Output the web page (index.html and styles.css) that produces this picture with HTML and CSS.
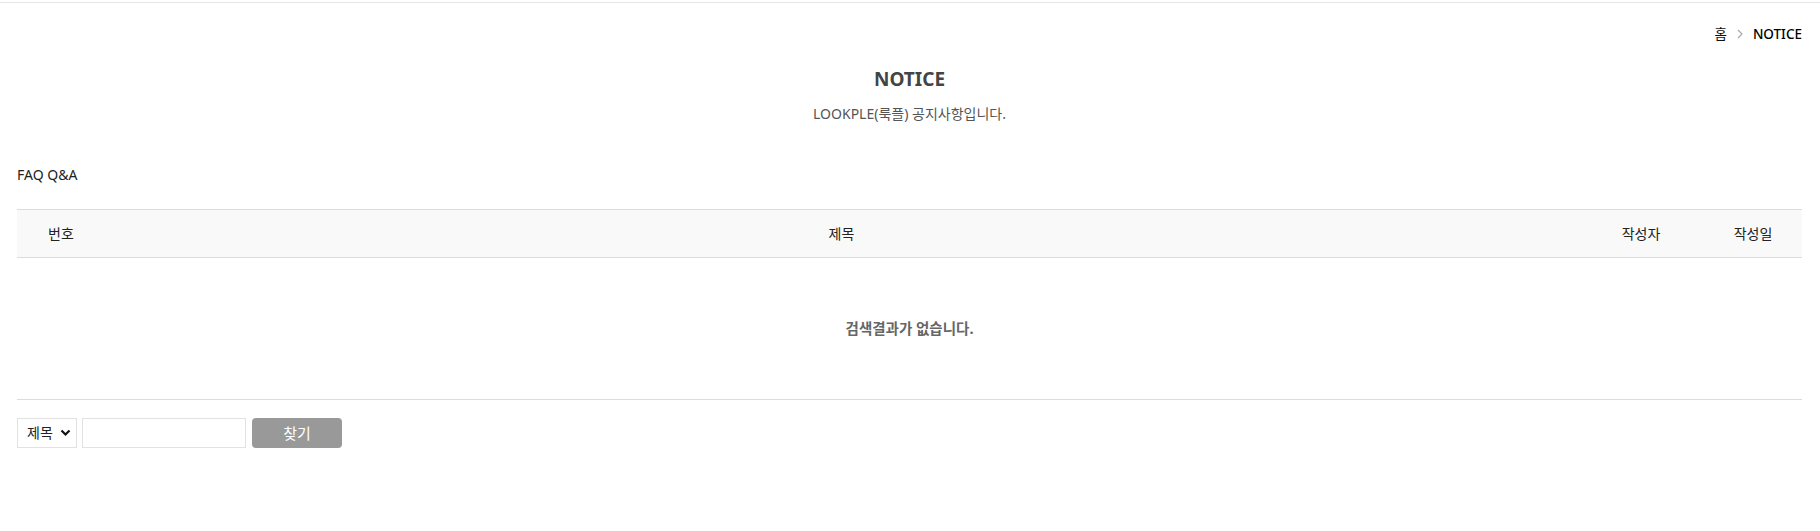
FILE: index.html
```html
<!DOCTYPE html>
<html lang="ko">
<head>
<meta charset="utf-8">
<title>NOTICE</title>
<link rel="stylesheet" href="styles.css">
</head>
<body>
<div class="topline"></div>
<div class="wrap">
  <nav class="crumb">
    <span>홈</span>
    <svg class="sep" width="6" height="10" viewBox="0 0 6 10"><path d="M1 1l4 4-4 4" fill="none" stroke="#aaa" stroke-width="1.2"/></svg>
    <strong>NOTICE</strong>
  </nav>
  <h2 class="title">NOTICE</h2>
  <p class="desc">LOOKPLE(룩플) 공지사항입니다.</p>
  <div class="links">FAQ Q&amp;A</div>
  <div class="board">
    <div class="row head">
      <div class="c-no">번호</div>
      <div class="c-subj">제목</div>
      <div class="c-writer">작성자</div>
      <div class="c-date">작성일</div>
    </div>
    <div class="empty">검색결과가 없습니다.</div>
  </div>
  <form class="search">
    <div class="sel">
      <select><option>제목</option></select>
      <svg class="chev" width="11" height="8" viewBox="0 0 11 8"><path d="M1.5 1.5l4 4 4-4" fill="none" stroke="#111" stroke-width="2.2"/></svg>
    </div>
    <input type="text" class="kw">
    <button type="button" class="btn">찾기</button>
  </form>
</div>
</body>
</html>
```
FILE: styles.css
```css
html, body { margin: 0; padding: 0; background: #fff; }
body {
  font-family: "Noto Sans", "Noto Sans CJK KR", sans-serif;
  font-size: 14px;
  color: #222;
}
.topline { margin-top: 2px; height: 1px; background: #e6e6e6; }
.wrap { padding: 0 18px 0 17px; }
.crumb {
  display: flex; justify-content: flex-end; align-items: center;
  gap: 10px; padding-top: 21px; height: 20px; line-height: 20px;
  font-size: 13.5px; color: #111;
}
.crumb strong { font-weight: 500; color: #000; }
.crumb .sep { display: block; }
.title {
  margin: 23px 0 0; text-align: center;
  font-size: 19px; line-height: 24px; font-weight: 700; color: #444;
}
.desc {
  margin: 14px 0 0; text-align: center;
  font-size: 14px; line-height: 18px; color: #555;
}
.links { margin-top: 42px; line-height: 20px; font-size: 14px; color: #222; }
.board { margin-top: 24px; }
.row.head {
  display: grid; grid-template-columns: 88px 1fr 126px 98px;
  align-items: center; height: 45px; padding-bottom: 2px;
  background: #f9f9f9; border-top: 1px solid #dcdcdc; border-bottom: 1px solid #dcdcdc;
  font-size: 14px; color: #222; text-align: center;
}
.empty {
  height: 138px; padding-bottom: 3px; display: flex; align-items: center; justify-content: center;
  border-bottom: 1px solid #dcdcdc;
  font-size: 14.5px; font-weight: 700; color: #666;
}
.search { display: flex; align-items: center; margin-top: 18px; }
.sel { position: relative; width: 60px; height: 30px; }
.sel select {
  appearance: none; -webkit-appearance: none;
  width: 60px; height: 30px; box-sizing: border-box;
  border: 1px solid #e2e2e2; background: #fff; border-radius: 0;
  padding: 0 0 2px 9px; font-family: inherit; font-size: 14px; color: #222; outline: none;
}
.sel .chev { position: absolute; left: 43px; top: 11px; pointer-events: none; }
.kw {
  margin-left: 5px; width: 164px; height: 30px; box-sizing: border-box;
  border: 1px solid #e2e2e2; padding: 0 6px; outline: none;
}
.btn {
  margin-left: 6px; width: 90px; height: 30px; box-sizing: border-box;
  background: #999; border: 0; border-radius: 4px; color: #fff;
  font-family: inherit; font-size: 15px; padding: 0 0 2px;
}
```
